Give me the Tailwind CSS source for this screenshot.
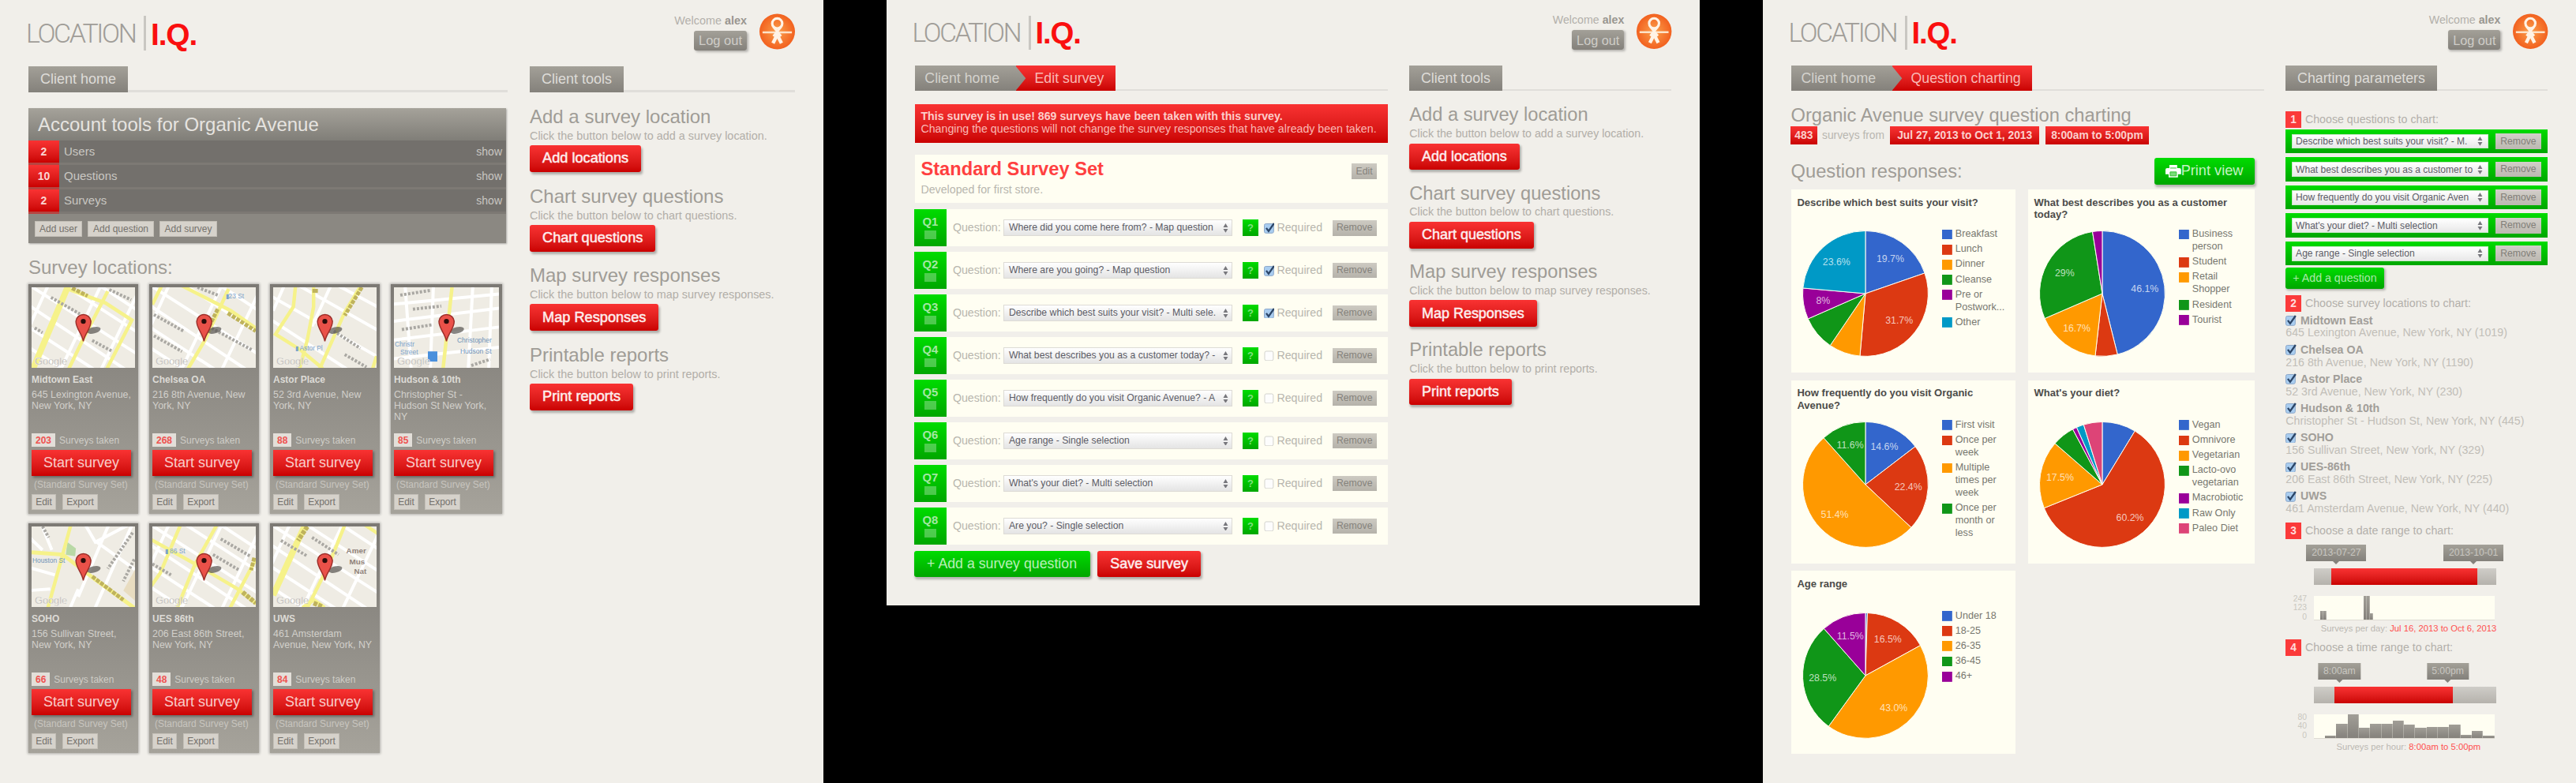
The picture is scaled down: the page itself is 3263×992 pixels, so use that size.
<!DOCTYPE html>
<html lang="en">
<head>
<meta charset="utf-8">
<title>Location I.Q.</title>
<script src="https://cdn.jsdelivr.net/npm/@tailwindcss/browser@4"></script>
</head>
<body class="bg-black">
<div id="app" class="flex h-[992px] w-[3263px] items-start gap-20 overflow-hidden bg-black font-['Liberation_Sans',Arial,sans-serif] text-[#a09d97]"></div>
<script>
const GREY = 'bg-linear-to-b from-[#a3a098] to-[#84817b]';
const RED = 'bg-linear-to-b from-[#f93232] to-[#ca0000]';
const GREEN = 'bg-linear-to-b from-[#00dc00] to-[#00a600]';
const each = (list, fn) => list.map(fn).join('');

/* ---------- shared pieces ---------- */
const header = `
<header class="flex h-[84px] items-start justify-between pl-[33px] pr-9 pt-[17px]">
  <div class="mt-[3px] flex h-11 items-center">
    <span class="w-[137px] font-['Roboto','Liberation_Sans',sans-serif] text-[34px] font-light leading-none tracking-[-2.4px] text-[#a09d98]">LOCATION</span>
    <span class="ml-[12px] h-11 w-[3px] bg-[#c9c7c2]"></span>
    <span class="ml-[6px] mt-[2px] text-[39px] font-bold leading-none tracking-[-1.2px] text-[#fa0f0f]">I.Q.</span>
  </div>
  <div class="flex items-start">
    <div class="mr-4 flex flex-col items-end">
      <p class="mt-[2px] text-[14.4px] leading-[14px] text-[#b3b0aa]">Welcome <b class="text-[#999690]">alex</b></p>
      <span class="mt-[6px] flex h-[25px] w-[67px] items-center justify-center rounded-[3px] ${GREY} text-[16.5px] text-[#cfcdc8] shadow-[2px_2px_3px_rgba(0,0,0,0.25)]">Log out</span>
    </div>
    <svg class="h-[46px] w-[45px]" viewBox="0 0 46 46">
      <defs><radialGradient id="org"><stop offset="0" stop-color="#fba04c"/><stop offset="1" stop-color="#f2611f"/></radialGradient></defs>
      <circle cx="23" cy="23" r="23" fill="url(#org)"/>
      <circle cx="23" cy="12.500" r="6.500" fill="none" stroke="#fff3e6" stroke-width="3.2"/>
      <path d="M4 24H42" stroke="#fde3c8" stroke-width="2.6"/>
      <path d="M18 17L28 29M28 17L18 29" stroke="#fff3e6" stroke-width="3"/>
      <path d="M17.500 38L23 27L28.500 38" fill="none" stroke="#fff3e6" stroke-width="4.500"/>
    </svg>
  </div>
</header>`;

const tabBar = (inner) => `<div class="flex h-[33px] items-start border-b-[3px] border-[#e0deda]">${inner}</div>`;
const tab = (t) => `<span class="flex h-[33px] items-center ${GREY} px-[15px] text-[18px] text-[#dedcd8]">${t}</span>`;
const crumbs = (t) => `
<span class="flex h-[33px] w-[130px] items-center ${GREY} pl-[13px] text-[18px] text-[#d4d2cd]">Client home</span>
<span class="relative flex h-[33px] items-center ${RED} pl-[24px] pr-[15px] text-[18px] text-[#f9b9b5]">
  <svg class="absolute left-[-1px] top-0 h-[33px] w-[14px]" viewBox="0 0 14 33"><defs><linearGradient id="gr" x2="0" y2="1"><stop stop-color="#a3a098"/><stop offset="1" stop-color="#84817b"/></linearGradient></defs><path d="M0 0L13.5 16.5L0 33Z" fill="url(#gr)"/></svg>
  ${t}</span>`;

const redButton = (t) => `<span class="inline-flex h-[34px] items-center rounded-[3px] ${RED} px-4 text-[18.2px] text-[#fdeeee] shadow-[2px_3px_3px_rgba(0,0,0,0.28)] [-webkit-text-stroke:0.5px_#fdeeee]">${t}</span>`;
const tools = `
<div class="w-[336px]">
  ${tabBar(tab('Client tools'))}
  <div class="pt-[19px]">
  ${each([
    ['Add a survey location', 'Click the button below to add a survey location.', 'Add locations'],
    ['Chart survey questions', 'Click the button below to chart questions.', 'Chart questions'],
    ['Map survey responses', 'Click the button below to map survey responses.', 'Map Responses'],
    ['Printable reports', 'Click the button below to print reports.', 'Print reports']
  ], ([h, d, b]) => `<section class="h-[100.7px] whitespace-nowrap">
    <h2 class="text-[24px] leading-[24px] text-[#9f9c96]">${h}</h2>
    <p class="text-[14.4px] leading-[24px] text-[#b1aea8]">${d}</p>
    ${redButton(b)}</section>`)}
  </div>
</div>`;
const columns = (left, right) => `<div class="flex items-start gap-[28px] pl-9 pr-9">${left}${right}</div>`;
const check = (on) => on
  ? `<svg class="h-[14px] w-[14px] shrink-0" viewBox="0 0 14 14"><rect x=".5" y="1.5" width="12" height="12" rx="2" fill="#a9cdf0" stroke="#8aa6c8"/><path d="M3 7L6 11L13 1" fill="none" stroke="#2c4668" stroke-width="2.4"/></svg>`
  : `<svg class="h-[14px] w-[14px] shrink-0" viewBox="0 0 14 14"><rect x="1" y="1" width="11" height="12" rx="2" fill="#fdfdfd" stroke="#d2d2cc"/></svg>`;
const updown = `<svg class="h-3 w-[7px] shrink-0" viewBox="0 0 7 12"><path d="M3.5 0L6.5 5H.5ZM3.5 12L.5 7H6.5Z" fill="#77777c"/></svg>`;

/* ---------- page 1: client home ---------- */
const pin = `<ellipse cx="80" cy="55" rx="9" ry="4" transform="rotate(-14 80 55)" fill="#55534f" opacity=".7"/><path d="M66.500 69C65 59 57 53 57 43.500A9.700 9.700 0 0 1 76.300 43.500C76.300 53 68.500 59 66.500 69Z" fill="#ea5149" stroke="#9c2f2a" stroke-width="1.500"/><circle cx="66.500" cy="43.500" r="3.200" fill="#2a0c0a"/>`;
const Y = (d, w = 4.5) => `<path d="${d}" fill="none" stroke="#f6f28a" stroke-width="${w}"/>`;
const O = (d, w = 4) => `<path d="${d}" fill="none" stroke="#bfb35c" stroke-width="${w}" stroke-dasharray="5 1.500"/>`;
const W = (d) => `<path d="${d}" fill="none" stroke="#ffffff" stroke-width="4"/>`;
const N = (d) => `<path d="${d}" fill="none" stroke="#aaa8a3" stroke-width="4" stroke-dasharray="3 2"/>`;
const lbl = (x, y, t, c = '#7ba3cc') => `<text x="${x}" y="${y}" font-size="8.500" fill="${c}">${t}</text>`;
const diag = W('M-5 -4L140 88M-5 22L125 108M-5 50L85 108M-5 76L45 108M40 -4L140 60M85 -4L140 32M22 -4L-5 55M90 -4L36 108M140 0L88 108');
const maps = [
  diag + Y('M48 -4L2 104', 8) + Y('M46 2L95 20L129 42L97 104') + Y('M98 5L66 67L48 104') + O('M52 1L72 11', 5) + N('M25 13L62 34') + N('M100 3L128 16') + N('M78 68L104 82') + N('M4 52L14 58'),
  diag + Y('M34 -4L101 30L134 53') + Y('M98 2L68 67L46 104') + Y('M13 -4L0 22') + O('M97 33L133 56', 5) + O('M84 28L66 64', 5) + N('M2 35L40 56') + N('M2 62L38 82') + N('M72 50L128 80') + N('M58 0L84 10') + lbl(94, 14, '▮23 St'),
  W('M-5 10L140 92M-5 40L100 108M30 -4L140 58M80 -4L140 28M15 -4L0 30M75 -4L50 50') + Y('M29 -4L26 25L3 60L35 80L64 104') + Y('M52 -4L52 25L44 67L34 104') + Y('M114 -4L92 32L60 104') + Y('M133 88L128 104') + O('M114 0L92 36', 5) + O('M54 2L54 8', 7) + N('M78 56L112 78') + N('M92 86L120 102') + lbl(28, 81, '▮ Astor Pl'),
  W('M-5 22L140 8M-5 44L140 26M-5 68L140 50M-5 92L140 76M14 -4L22 108M50 -4L46 108M100 -4L94 108M124 -4L120 108') + Y('M74 -4L62 106') + N('M8 10L46 4') + N('M24 28L60 24') + N('M10 54L48 48') + N('M98 100L122 92') + lbl(80, 71, 'Christopher', '#6f93b8') + lbl(84, 85, 'Hudson St', '#6f93b8') + lbl(1, 76, 'Christr') + lbl(8, 86, 'Street') + '<rect x="43" y="82" width="12" height="13" fill="#4a90dc"/>',
  W('M68 -4L82 20L140 -10M12 -4L26 30M100 -4L60 90M130 -4L80 108M84 20L140 60M-5 52L30 62M-5 82L24 80M60 80L48 108M-5 12L14 30') + '<path d="M46 20L57 28L56 38L44 36Z" fill="#b9d9a6"/><path d="M133 55L118 82L133 95Z" fill="#e8dcc0"/>' + Y('M51 -4L40 36L21 104') + Y('M0 33L40 36L82 68L132 104', 5) + O('M78 64L118 94', 5) + N('M130 8L98 54') + N('M132 42L118 70') + N('M14 0L22 14') + lbl(1, 46, 'Houston St', '#6f93b8'),
  diag + Y('M37 -4L10 60L-3 78') + Y('M-3 16L55 48L110 80L134 99') + Y('M84 -4L55 48L32 104') + Y('M133 42L100 104') + O('M116 84L133 98', 6) + O('M131 40L127 56', 5) + N('M88 16L126 38') + N('M78 36L112 56') + N('M0 48L24 62') + lbl(16, 34, '▮ 86 St'),
  diag + Y('M42 -4L0 88', 8) + Y('M93 -4L72 48L44 104') + Y('M118 -2L136 10') + Y('M38 104L52 94L66 104', 5) + O('M44 0L32 18', 6) + O('M52 98L64 103', 6) + N('M10 18L44 38') + N('M50 14L84 36') + '<text x="94" y="34" font-size="10" font-weight="700" fill="#8f827a">Amer</text><text x="98" y="48" font-size="10" font-weight="700" fill="#8f827a">Mus</text><text x="104" y="61" font-size="10" font-weight="700" fill="#8f827a">Nat</text>'
];
const locations = [
  ['Midtown East', '645 Lexington Avenue, New York, NY', 203],
  ['Chelsea OA', '216 8th Avenue, New York, NY', 268],
  ['Astor Place', '52 3rd Avenue, New York, NY', 88],
  ['Hudson &amp; 10th', 'Christopher St -<br>Hudson St New York,<br>NY', 85],
  ['SOHO', '156 Sullivan Street, New York, NY', 66],
  ['UES 86th', '206 East 86th Street, New York, NY', 48],
  ['UWS', '461 Amsterdam Avenue, New York, NY', 84]
];
const tan = 'inline-flex h-5 items-center justify-center bg-[#d6d2cb] text-[12px] text-[#74716b] border border-[#c3bfb7]';
const page1 = `
<main class="h-[992px] w-[1043px] shrink-0 bg-[#f1efea]">
${header}
${columns(`
<div class="w-[607px]">
  ${tabBar(`<span class="flex h-[33px] w-[126px] items-center justify-center ${GREY} text-[18px] text-[#dedcd8]">Client home</span>`)}
  <section class="mt-5 w-[605px] shadow-[1px_1px_2px_rgba(0,0,0,0.3)]">
    <h2 class="flex h-[41px] items-center bg-linear-to-b from-[#a5a29a] to-[#807e78] pl-3 text-[24px] text-[#e6e4e0]">Account tools for Organic Avenue</h2>
    ${each([[2, 'Users'], [10, 'Questions'], [2, 'Surveys']], ([n, t]) => `
    <div class="flex h-[31px] items-center border-b-[3px] border-[#7d7974] bg-[#73706c] pr-[5px] text-[15px] text-[#c9c7c2]">
      <b class="-mb-[3px] flex h-[31px] w-[39px] items-center justify-center border-b-[3px] border-[#b84440] ${RED} text-[14px] text-[#fbd5d3]">${n}</b>
      <span class="ml-[6px] flex-1">${t}</span><span class="text-[14px]">show</span>
    </div>`)}
    <div class="flex h-[37px] items-center gap-[7px] bg-[#8b8882] pl-2">
      <span class="${tan} w-[60px]">Add user</span><span class="${tan} w-[84px]">Add question</span><span class="${tan} w-[73px]">Add survey</span>
    </div>
  </section>
  <h2 class="flex h-[52px] items-center pt-[9px] text-[24px] text-[#9f9c96]">Survey locations:</h2>
  <div class="grid grid-cols-[139px_139px_139px_141px] gap-x-[14px] gap-y-3">
  ${each(locations, ([n, a, c], i) => `
    <article class="h-[291px] bg-linear-to-b from-[#7c7974] to-[#a6a39b] px-1 pt-1 shadow-[0_0_3px_1px_rgba(0,0,0,0.28)]">
      <svg class="block h-[102px] w-full bg-[#efece4]" viewBox="0 0 133 103" preserveAspectRatio="none">${maps[i]}<text x="4" y="99" font-size="13" fill="#a5a39e" stroke="#f6f4f0" stroke-width=".4">Google</text>${pin}</svg>
      <h3 class="mt-[7px] text-[12px] font-bold leading-4 text-[#dddbd6]">${n}</h3>
      <p class="mt-1 h-14 w-[134px] text-[12.4px] leading-[14px] text-[#d2d0cb]">${a}</p>
      <p class="flex h-[17px] items-center text-[12px] text-[#cfcdc7]"><b class="mr-[5px] flex h-[17px] items-center bg-[#e3dfd9] px-[5px] text-[#ef5250]">${c}</b>Surveys taken</p>
      <span class="mt-1 flex h-[33px] w-[126px] items-center justify-center ${RED} text-[18px] text-[#f9cdca] shadow-[2px_2px_3px_rgba(0,0,0,0.35)]">Start survey</span>
      <p class="whitespace-nowrap pl-[3px] text-[12px] leading-[23px] text-[#c8c5bf]">(Standard Survey Set)</p>
      <div class="flex gap-2"><span class="${tan} w-[31px]">Edit</span><span class="${tan} w-[45px]">Export</span></div>
    </article>`)}
  </div>
</div>`, tools)}
</main>`;

/* ---------- page 2: edit survey ---------- */
const questions = [
  ['Where did you come here from? - Map question', 1],
  ['Where are you going? - Map question', 1],
  ['Describe which best suits your visit? - Multi sele.', 1],
  ['What best describes you as a customer today? -', 0],
  ['How frequently do you visit Organic Avenue? - A', 0],
  ['Age range - Single selection', 0],
  ["What's your diet? - Multi selection", 0],
  ['Are you? - Single selection', 0]
];
const greyBtn = 'flex h-5 items-center justify-center bg-linear-to-b from-[#cdcac2] to-[#b5b2aa] text-[12.4px] text-[#85827c]';
const page2 = `
<main class="h-[777px] w-[1043.600px] shrink-0 bg-[#f1efea] [zoom:0.987]">
${header}
${columns(`
<div class="w-[607px]">
  ${tabBar(crumbs('Edit survey'))}
  <div class="mt-[17px] h-[49px] ${RED} pl-2 pt-[7px] text-[14.4px] leading-[16.500px] whitespace-nowrap text-[#fab8b4]">
    <p class="font-bold text-[#fccdca]">This survey is in use! 869 surveys have been taken with this survey.</p>
    <p>Changing the questions will not change the survey responses that have already been taken.</p>
  </div>
  <section class="mt-4 flex h-[61px] items-start justify-between bg-[#fffef2] pl-2 pr-[14px] pt-[6px]">
    <div><h2 class="text-[24px] font-bold leading-[26px] text-[#ff4040]">Standard Survey Set</h2>
    <p class="mt-[5px] text-[14.4px] leading-[16px] text-[#b8b6ae]">Developed for first store.</p></div>
    <span class="${greyBtn} mt-[5px] w-8">Edit</span>
  </section>
  <div class="mt-[9px] flex flex-col gap-[7.700px]">
  ${each(questions, ([q, on], i) => `
    <div class="-ml-px flex h-[47px] items-center bg-[#fffef2] pr-[14px] text-[14.4px] text-[#b8b6ae]">
      <div class="flex h-[47px] w-[42px] flex-col items-center ${GREEN} pt-[10px] text-[15px] font-bold leading-[14px] text-[#a3e8a3]">Q${i + 1}<span class="mt-[3px] h-[11px] w-[15px] bg-white/30"></span></div>
      <span class="ml-2 w-[65px]">Question:</span>
      <div class="flex h-[21px] w-[294px] items-center justify-between border-2 border-[#dddbd5] bg-linear-to-b from-white to-[#e4e4e4] pl-[6px] pr-1 text-[12.400px] whitespace-nowrap text-[#5c5c66]">${q}${updown}</div>
      <b class="ml-[13px] flex h-[22px] w-5 items-center justify-center ${GREEN} text-[13px] text-[#7ee07e]">?</b>
      <span class="ml-[7px] flex items-center gap-[3px]">${check(on)}Required</span>
      <span class="${greyBtn} ml-auto w-[57px]">Remove</span>
    </div>`)}
  </div>
  <div class="-ml-px mt-2 flex gap-[10px]">
    <span class="flex h-[34px] w-[226px] items-center justify-center rounded-[3px] ${GREEN} text-[18px] text-[#b9efb9] shadow-[2px_3px_3px_rgba(0,0,0,0.25)]">+ Add a survey question</span>
    ${redButton('Save survey')}
  </div>
</div>`, tools)}
</main>`;

/* ---------- page 3: question charting ---------- */
const C = { blue: '#3366cc', red: '#dc3912', orange: '#ff9900', green: '#109618', purple: '#990099', cyan: '#0099c6', pink: '#dd4477' };
const charts = [
  ['Describe which best suits your visit?', [['blue', 19.7, 'Breakfast', 1], ['red', 31.7, 'Lunch', 1], ['orange', 8.1, 'Dinner'], ['green', 8.9, 'Cleanse'], ['purple', 8, 'Pre or<br>Postwork...', 1], ['cyan', 23.6, 'Other', 1]]],
  ['What best describes you as a customer today?', [['blue', 46.1, 'Business<br>person', 1], ['red', 5.7, 'Student'], ['orange', 16.7, 'Retail<br>Shopper', 1], ['green', 29, 'Resident', 1], ['purple', 2.5, 'Tourist']]],
  ['How frequently do you visit Organic Avenue?', [['blue', 14.6, 'First visit', 1], ['red', 22.4, 'Once per<br>week', 1], ['orange', 51.4, 'Multiple<br>times per<br>week', 1], ['green', 11.6, 'Once per<br>month or<br>less', 1]]],
  ["What's your diet?", [['blue', 8.7, 'Vegan'], ['red', 60.2, 'Omnivore', 1], ['orange', 17.5, 'Vegetarian', 1], ['green', 5.8, 'Lacto-ovo<br>vegetarian'], ['purple', 1.1, 'Macrobiotic'], ['cyan', 1.9, 'Raw Only'], ['pink', 4.8, 'Paleo Diet']]],
  ['Age range', [['blue', 0.5, 'Under 18'], ['red', 16.5, '18-25', 1], ['orange', 43, '26-35', 1], ['green', 28.5, '36-45', 1], ['purple', 11.5, '46+', 1]]]
];
const pie = (slices) => {
  let at = 0, paths = '', labels = '';
  for (const [c, v, , show] of slices) {
    const a = at / 100 * 2 * Math.PI, b = (at + v) / 100 * 2 * Math.PI, m = (a + b) / 2;
    const p = (t, r) => (81 + r * Math.sin(t)).toFixed(2) + ' ' + (81 - r * Math.cos(t)).toFixed(2);
    paths += `<path d="M81 81L${p(a, 80.5)}A80.5 80.5 0 ${v > 50 ? 1 : 0} 1 ${p(b, 80.5)}Z" fill="${C[c]}" stroke="#fffef2" stroke-width="1"/>`;
    if (show) { const [x, y] = p(m, 55).split(' '); labels += `<text x="${x}" y="${+y + 4.500}" text-anchor="middle" font-size="12.500" fill="#ffffff" fill-opacity=".72">${v === 43 ? '43.0' : v}%</text>`; }
    at += v;
  }
  return `<svg class="absolute left-[15px] top-[53px] h-[162px] w-[162px]" viewBox="0 0 162 162">${paths}${labels}</svg>`;
};
const num = (n, t) => `<div class="flex h-[21px] items-center text-[14.4px] text-[#b3b0aa]"><b class="mr-[5px] flex h-[21px] w-5 items-center justify-center bg-[#fb3a3a] text-[14px] text-[#ffdcdc]">${n}</b>${t}</div>`;
const handle = (x, w, t) => `<div class="absolute top-0 flex -translate-x-1/2 flex-col items-center" style="left:${x}px;width:${w}px"><span class="flex h-[21px] w-full items-center justify-center ${GREY} text-[12.400px] text-[#c9c7c1]">${t}</span><span class="border-x-[5px] border-t-[5px] border-x-transparent border-t-[#84817b]"></span></div>`;
const slider = (handles, x, w) => `
<div class="relative ml-9 h-[53px] w-[234px] pt-[30px]">${handles}
  <div class="h-[22px] bg-linear-to-b from-[#cfcdc8] to-[#b5b2ac]"><div class="h-[22px] ${RED}" style="margin-left:${x}px;width:${w}px"></div></div>
</div>`;
const histo = (ticks, bars, cell) => `
<div class="flex h-[31px] w-[270px]">
  <div class="flex w-9 flex-col justify-between pr-[9px] text-right text-[10.5px] leading-[8px] text-[#c9c7c0]">${each(ticks, t => `<span>${t}</span>`)}</div>
  <div class="relative flex w-[232px] items-end border-b border-[#dedbd2] bg-[#fffef2]">${each(bars, h => `<span class="border-r border-[#f6f4ea]/30 bg-linear-to-b from-[#a19e97] to-[#84817b]" style="width:${cell}px;height:${h}%"></span>`)}</div>
</div>`;
const days = Array(58).fill(0); days[2] = 35; days[3] = 35; days[16] = 100; days[17] = 100; days[18] = 25;
const rows = [
  ['Midtown East', '645 Lexington Avenue, New York, NY (1019)'],
  ['Chelsea OA', '216 8th Avenue, New York, NY (1190)'],
  ['Astor Place', '52 3rd Avenue, New York, NY (230)'],
  ['Hudson &amp; 10th', 'Christopher St - Hudson St, New York, NY (445)'],
  ['SOHO', '156 Sullivan Street, New York, NY (329)'],
  ['UES-86th', '206 East 86th Street, New York, NY (225)'],
  ['UWS', '461 Amsterdam Avenue, New York, NY (440)']
];
const pill = `flex h-[23px] items-center ${RED} text-[14px] font-bold text-[#fbd0cd] justify-center`;
const page3 = `
<main class="h-[1005.100px] w-[1043.600px] shrink-0 bg-[#f1efea] [zoom:0.987]">
${header}
${columns(`
<div class="w-[607px]">
  ${tabBar(crumbs('Question charting'))}
  <h2 class="mt-[19px] text-[24px] leading-[26px] text-[#9f9c96]">Organic Avenue survey question charting</h2>
  <div class="-ml-px flex items-center gap-2 text-[14.400px] text-[#b8b6b0]">
    <span class="${pill} w-[35px]">483</span><span class="-mx-0.5 text-[14px]">surveys from</span><span class="${pill} ml-px w-[192px]">Jul 27, 2013 to Oct 1, 2013</span><span class="${pill} w-[132px]">8:00am to 5:00pm</span>
  </div>
  <div class="mb-[5px] mt-[17px] flex h-[36px] w-[595px] items-center justify-between">
    <h2 class="pt-0.5 text-[24px] text-[#9f9c96]">Question responses:</h2>
    <span class="flex h-[35px] w-[129px] items-center justify-center rounded-[3px] ${GREEN} text-[18.400px] text-[#c4f3c4] shadow-[2px_3px_3px_rgba(0,0,0,0.25)]"><svg class="h-[18px] w-5" viewBox="0 0 20 18"><path d="M5 1H15V5H18Q20 5 20 7V13H16V17H4V13H0V7Q0 5 2 5H5Z" fill="#fff"/><path d="M6 10H14V15H6ZM6 5H14" fill="#7bdc7b" stroke="#2fc22f"/></svg>Print view</span>
  </div>
  <div class="grid w-[595px] grid-cols-[288px_291px] gap-x-4 gap-y-[10px]">
  ${each(charts, ([t, s]) => `
    <section class="relative flex h-[235px] bg-[#fffef2] pl-[194px]">
      <h3 class="absolute left-2 top-[9px] w-[260px] text-[13.200px] font-bold leading-[16px] text-[#4c4c4a]">${t}</h3>
      ${pie(s)}
      <ul class="mt-[50px] flex w-[94px] flex-col gap-[3.200px] text-[12.800px] leading-[16.200px] text-[#77776f]">
        ${each(s, ([c, , n]) => `<li class="flex gap-[4px] whitespace-nowrap"><svg class="mt-[1.500px] h-[13px] w-[13px] shrink-0"><rect width="13" height="13" fill="${C[c]}"/></svg><span>${n}</span></li>`)}
      </ul>
    </section>`)}
  </div>
</div>`, `
<div class="w-[336px]">
  ${tabBar(tab('Charting parameters'))}
  <div class="mt-[26px]">${num(1, 'Choose questions to chart:')}</div>
  <div class="mt-[2px] flex flex-col gap-[5px]">
  ${each(['Describe which best suits your visit? - M.', 'What best describes you as a customer to', 'How frequently do you visit Organic Aven', "What's your diet? - Multi selection", 'Age range - Single selection'], (q) => `
    <div class="flex h-[31px] items-center justify-between ${GREEN} pl-2 pr-2">
      <div class="flex h-[19px] w-[252px] items-center justify-between border border-[#c9e8c9] bg-linear-to-b from-white to-[#e8e8e8] pl-1 pr-[6px] text-[12.200px] whitespace-nowrap text-[#5c5c66]">${q}${updown}</div>
      <span class="flex h-5 w-[59px] items-center justify-center bg-linear-to-b from-[#d3cfc9] to-[#bcb8b1] text-[12.400px] text-[#827f79]">Remove</span>
    </div>`)}
  </div>
  <span class="mt-[3px] flex h-[27px] w-[126px] items-center justify-center rounded-[3px] ${GREEN} text-[14.400px] text-[#a8eaa8] shadow-[2px_2px_3px_rgba(0,0,0,0.25)]">+ Add a question</span>
  <div class="mt-[8px]">${num(2, 'Choose survey locations to chart:')}</div>
  <div class="mt-[3px]">
  ${each(rows, ([n, a]) => `<div class="h-[37.600px] whitespace-nowrap text-[14.400px]"><p class="flex items-center gap-[5px] font-bold leading-[17px] text-[#a19e99]">${check(1)}${n}</p><p class="leading-[16px] text-[#c1beb8]">${a}</p></div>`)}
  </div>
  <div class="mt-[5px]">${num(3, 'Choose a date range to chart:')}</div>
  <div class="pt-[7px]">${slider(handle(29, 77, '2013-07-27') + handle(205, 77, '2013-10-01'), 22, 188)}</div>
  <div class="mt-[13px]">${histo([247, 123, 0], days, 4)}</div>
  <p class="w-[340px] pl-[45px] text-[11.400px] leading-[22px] whitespace-nowrap text-[#bbb8b2]">Surveys per day: <span class="text-[#ff4f4f]">Jul 16, 2013 to Oct 6, 2013</span></p>
  <div class="mt-[3px]">${num(4, 'Choose a time range to chart:')}</div>
  <div class="pt-[9px]">${slider(handle(33, 54, '8:00am') + handle(172, 54, '5:00pm'), 27, 152)}</div>
  <div class="mt-[13px]">${histo([80, 40, 0], [0, 9, 60, 100, 42, 58, 60, 72, 56, 43, 46, 46, 56, 14, 29, 10], 14.5)}</div>
  <p class="pl-[65px] text-[11.400px] leading-[22px] whitespace-nowrap text-[#bbb8b2]">Surveys per hour: <span class="text-[#ff4f4f]">8:00am to 5:00pm</span></p>
</div>`)}
</main>`;

document.getElementById('app').innerHTML = page1 + page2 + page3;
</script>
</body>
</html>
